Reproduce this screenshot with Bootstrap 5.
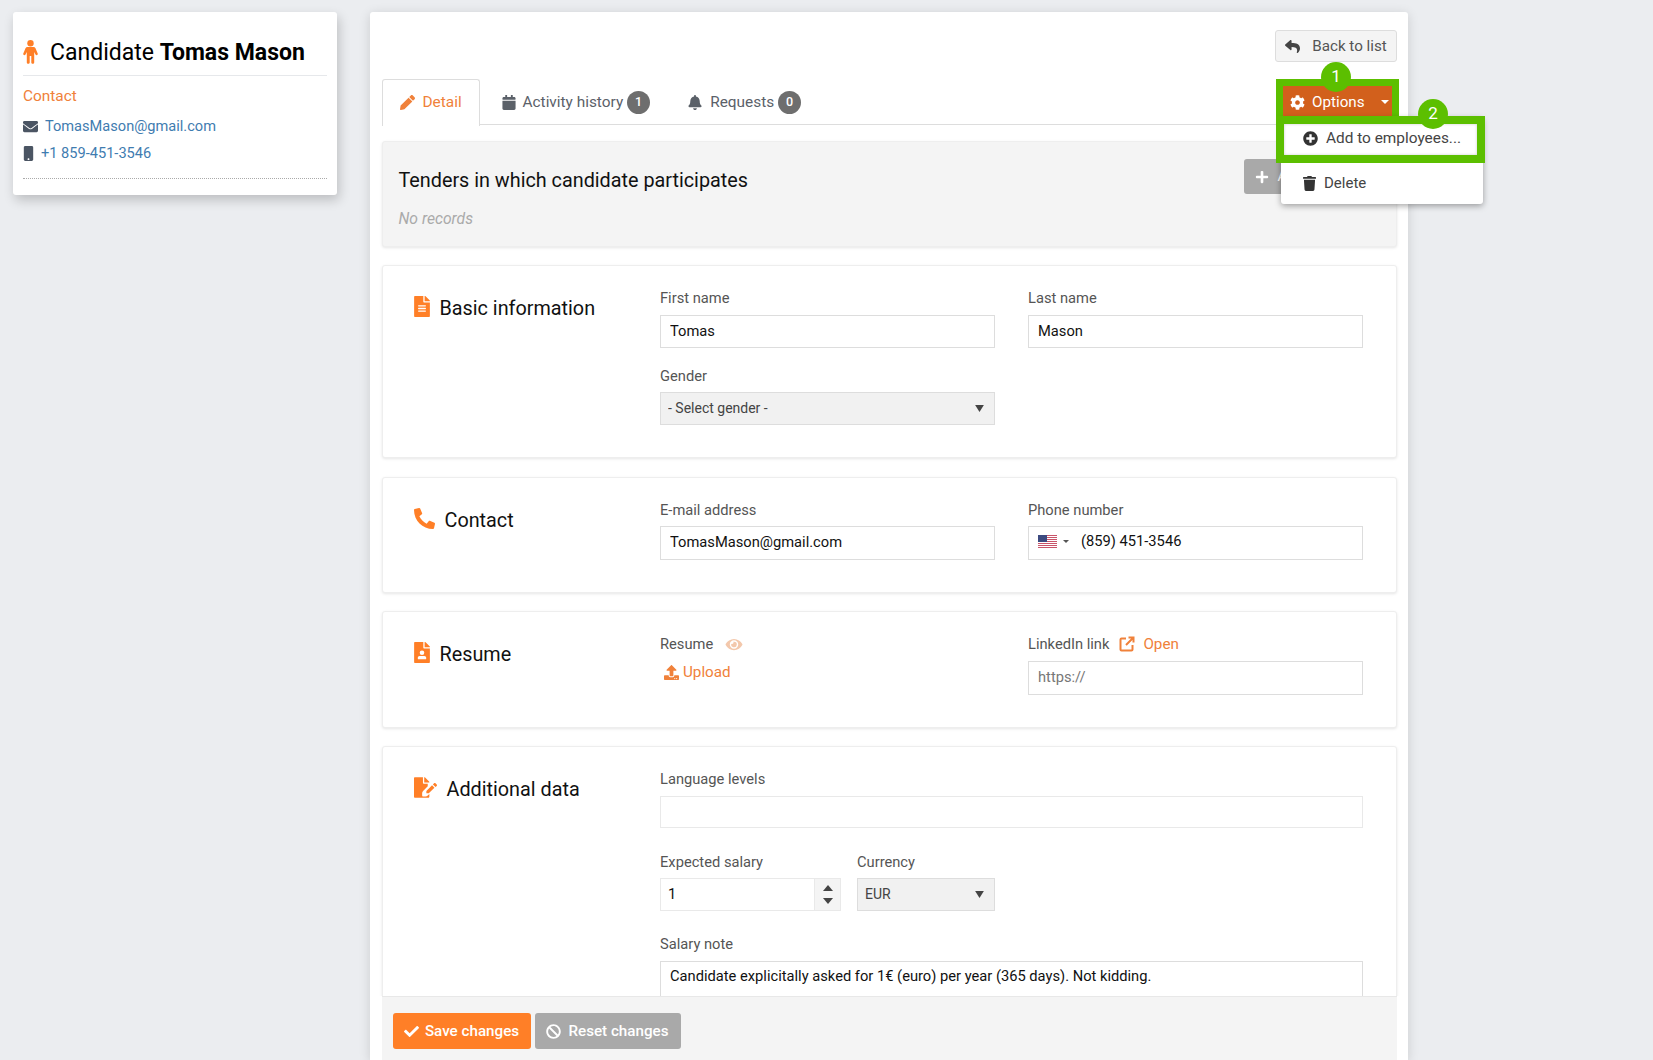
<!DOCTYPE html>
<html lang="en">
<head>
<meta charset="utf-8">
<title>Candidate Tomas Mason</title>
<link href="https://cdn.jsdelivr.net/npm/bootstrap@5.3.0/dist/css/bootstrap.min.css" rel="stylesheet">
<style>
html,body{height:100%}
body{background:#ebedf0;font-family:Roboto,"Liberation Sans",sans-serif;font-size:14.7px;color:#555;overflow:hidden;padding:12px 13px 0}
svg{fill:currentColor;display:inline-block;flex:none}
.ic-orange{color:#ff7f27}
.side-card{width:324px;height:183px;background:#fff;border-radius:3px;box-shadow:2px 5px 12px rgba(0,0,0,.2);padding:26px 10px 0;flex:none}
.side-title{font-size:23px;color:#000;font-weight:400;margin:0;line-height:30px;height:38px;border-bottom:1px solid #e6e8eb;display:flex;gap:12px;align-items:flex-start}
.side-title svg{margin-top:2px}
.side-head{color:#f0813a;font-size:15.4px;line-height:22px;margin-top:9px;margin-bottom:8px}
.side-row{display:flex;align-items:center;line-height:22px;margin-bottom:5px;color:#4b5563;font-size:14.6px}
.side-row svg{margin-right:7px}
.side-row a{color:#3f7cb0;text-decoration:none}
.side-dots{border-top:1px dotted #aaa;margin-top:14px}
.main-card{width:1038px;margin-left:33px;height:calc(100vh - 12px);background:#fff;border-radius:3px 3px 0 0;box-shadow:0 2px 12px rgba(0,0,0,.14);display:flex;flex-direction:column;flex:none}
.main-head{padding:18px 11px 0 11.5px;position:relative;z-index:5}
.back-btn{height:32px;width:122px;background:#f4f4f4;border:1px solid #ddd;border-radius:3px;color:#555;font-size:15.2px;padding:0;display:flex;align-items:center;justify-content:center;gap:12px;margin-left:auto;margin-bottom:17px}
.back-btn svg{color:#444}
.tab-bar{display:flex;align-items:flex-start;height:46px;border-bottom:1px solid #ddd;position:relative}
.tab-item{height:46px;display:flex;align-items:center;padding:0 17px;color:#5b6169;gap:8px;border:1px solid transparent;border-bottom:0;text-decoration:none;font-size:15.4px}
.tab-item.is-active{background:#fff;border-color:#ddd;color:#f0813a;height:47px;padding-bottom:1px;border-radius:3px 3px 0 0;width:98px;margin-right:4px}
.tab-cal{margin-right:-1px}
.tab-req{margin-left:2px}
.tab-count{width:23px;height:23px;border-radius:50%;background:#6e6e6e;color:#fff;font-size:12.5px;font-weight:500;display:flex;align-items:center;justify-content:center;margin-left:-4px}
.opt-wrap{position:absolute;right:5px;top:7px;width:109px;height:30px}
.opt-btn{width:109px;height:30px;background:#d2601c;color:#fff;border:0;border-radius:0;outline:7px solid #5cbf00;padding:2px 3px 0 7px;display:flex;align-items:center;gap:7px;font-size:15.2px;position:relative;z-index:1}
.opt-caret{margin-left:auto;width:0;height:0;border:4px solid transparent;border-top-color:#fff;border-bottom:0}
.opt-menu{display:block;position:absolute;left:-2px;top:31px;width:202px;height:87px;background:#fff;border:0;border-radius:3px;box-shadow:0 2px 6px rgba(0,0,0,.35);padding:0;z-index:2}
.opt-item{position:absolute;right:6px;display:flex;align-items:center;color:#444;padding:0 0 0 18px;text-decoration:none;white-space:nowrap}
.opt-add{left:3px;top:7px;height:31px;outline:8px solid #5cbf00;background:#fff;gap:8px;padding-left:19px;padding-bottom:2px;font-size:15.4px;box-shadow:0 0 3px rgba(0,0,0,.2) inset}
.opt-add svg{color:#333}
.opt-del{left:4px;top:52px;height:29px;gap:8px;font-size:15px;color:#444}
.opt-del svg{color:#333}
.step-dot{position:absolute;width:30px;height:30px;border-radius:50%;background:#5cbf00;color:#fff;font-size:17px;display:flex;align-items:center;justify-content:center;z-index:3}
.step-a{left:38px;top:-24px}
.step-b{left:135px;top:13px}
.scroll-area{flex:1 1 0;min-height:0;overflow:hidden;padding:16px 11px 0 11.5px}
.sec-panel{background:#fff;border:1px solid #eee;border-radius:3px;box-shadow:0 1px 3px rgba(0,0,0,.1);margin-bottom:18px;padding:21px 33px 16px 31px;display:flex}
.sec-shift{margin-top:19px}
.sec-muted{background:#f4f4f4;display:block;height:106px;padding:0 16px;position:relative}
.sec-muted h5{font-size:19.8px;font-weight:400;color:#111;margin:0;padding-top:24px;line-height:30px}
.no-rec{font-style:italic;color:#aaa;margin-top:12px;line-height:22px;font-size:15.7px}
.add-btn{position:absolute;left:861px;top:17px;width:140px;height:35px;background:#a9a9a9;color:#fff;border-radius:3px;display:flex;align-items:center;padding:0 11px;gap:9px;font-size:15px}
.sec-left{width:246.500px;flex:none;display:flex;gap:10px;align-items:flex-start;font-size:19.8px;color:#111;line-height:26px;padding-top:9px}
.sec-left svg{margin-top:0}
.sec-form{width:703px;flex:none}
.sec-row{--bs-gutter-x:33px;--bs-gutter-y:0}
.fld{margin-bottom:16px}
.fld-wide{margin-bottom:22px}
.fld-label{display:block;line-height:22px;margin-bottom:6px;color:#555}
.lbl-low{padding-top:1px;margin-bottom:5px;line-height:22px}
.fld-input{height:33px;border:1px solid #ddd;border-radius:0;padding:0 9px 2px;font-size:14.7px;color:#111;box-shadow:none}
.fld-tall{height:34px;padding-bottom:3px}
.lbl-tall{margin-bottom:5px}
.fld-soft{border-color:#e9e9e9}
.fld-short{height:32px}
.fld-input::placeholder{color:#777}
.fld-select{height:33px;border:1px solid #ddd;border-radius:0;padding:0 7px;font-size:14px;color:#444;background-color:#f1f1f1;background-position:right 10px center;background-size:9px 7px;background-image:url("data:image/svg+xml,%3Csvg xmlns='http://www.w3.org/2000/svg' viewBox='0 0 10 8'%3E%3Cpath fill='%23444' d='M0 0h10L5 8z'/%3E%3C/svg%3E")}
.phone-box{height:34px;border:1px solid #ddd;display:flex;align-items:center;padding:0 0 3px 9px;color:#111}
.phone-caret{width:0;height:0;border:3.5px solid transparent;border-top-color:#555;border-bottom:0;margin:0 12px 0 6px}
.link-orange{color:#f0813a;text-decoration:none;font-size:15.2px}
.inline-label{display:flex;align-items:center;line-height:22px;margin-bottom:6px}
.up-row{display:flex;align-items:center;gap:4px;line-height:22px;padding-left:4px}
.num-box{display:flex;height:33px;width:181px}
.num-box input{flex:1;min-width:0;padding-left:7px}
.num-spin{width:26px;border:1px solid #e9e9e9;border-left:0;background:#f4f4f4;display:flex;flex-direction:column;align-items:center;justify-content:center;gap:7px;color:#444}
.num-up,.num-down{width:0;height:0;border:5px solid transparent}
.num-up{border-bottom:6px solid #444;border-top:0}
.num-down{border-top:6px solid #444;border-bottom:0}
.cur-col{width:138px;margin-left:16px}
.note-box{height:60px;resize:none;padding-top:3px;line-height:22px;width:100%;display:block}
.foot-bar{height:64px;flex:none;margin:0 11px 0 11.5px;background:#f4f4f4;border-top:1px solid #e8e8e8;padding:16px 11px 0;display:flex;gap:4px}
.foot-btn{height:36px;border:0;border-radius:3px;color:#fff;font-size:15.2px;font-weight:500;display:flex;align-items:center;padding:0;justify-content:center}
.btn-save{width:138px;background:#ff7f27;gap:6px}
.btn-reset{width:146px;background:#a9a9a9;gap:7px}
.eye-ic{margin-left:12px}
.open-lnk{margin-left:10px}
</style>
</head>
<body class="d-flex align-items-start">
<aside class="side-card">
  <h4 class="side-title"><svg class="ic-orange" width="15" height="24" viewBox="0 0 15 24"><circle cx="7.5" cy="3.2" r="3.2"/><path d="M4.5 7h6c.9 0 1.6.4 2 1.2l2.2 5.3c.6 1.5-1.5 2.3-2.2.9L11.2 12v10.4c0 1.8-2.9 1.8-2.9 0V16H6.700v6.400c0 1.800-2.900 1.800-2.900 0V12l-1.300 2.400c-.7 1.400-2.800.6-2.200-.9l2.200-5.300C2.900 7.400 3.600 7 4.500 7z"/></svg><span>Candidate <b>Tomas Mason</b></span></h4>
  <div class="side-head">Contact</div>
  <div class="side-row"><svg width="15" height="15" viewBox="0 0 512 512"><path d="M502.3 190.8c3.9-3.1 9.7-.2 9.7 4.7V400c0 26.5-21.5 48-48 48H48c-26.5 0-48-21.500-48-48V195.6c0-5 5.700-7.800 9.700-4.700 22.400 17.400 52.100 39.500 154.100 113.600 21.100 15.400 56.700 47.800 92.200 47.600 35.700.3 72-32.800 92.300-47.600 102-74.100 131.600-96.300 154-113.700zM256 320c23.200.4 56.600-29.200 73.400-41.400 132.700-96.300 142.800-104.700 173.400-128.700 5.800-4.500 9.200-11.500 9.200-18.900v-19c0-26.500-21.500-48-48-48H48C21.500 64 0 85.500 0 112v19c0 7.400 3.400 14.300 9.200 18.900 30.600 23.900 40.700 32.400 173.400 128.700 16.800 12.200 50.200 41.800 73.400 41.400z"/></svg><a href="#">TomasMason@gmail.com</a></div>
  <div class="side-row"><svg width="11" height="15" viewBox="0 0 320 512"><path d="M272 0H48C21.500 0 0 21.500 0 48v416c0 26.500 21.500 48 48 48h224c26.500 0 48-21.500 48-48V48c0-26.500-21.500-48-48-48zM160 480c-17.700 0-32-14.300-32-32s14.300-32 32-32 32 14.300 32 32-14.300 32-32 32z"/></svg><a href="#">+1 859-451-3546</a></div>
  <div class="side-dots"></div>
</aside>

<main class="main-card">
  <div class="main-head">
    <button class="back-btn" type="button"><svg width="15" height="15" viewBox="0 0 512 512"><path d="M8.309 189.836L184.313 37.851C199.719 24.546 224 35.347 224 56.015v80.053c160.629 1.839 288 34.032 288 186.258 0 61.441-39.581 122.309-83.333 154.132-13.653 9.931-33.111-2.533-28.077-18.631 45.344-145.012-21.507-183.510-176.590-185.742V360c0 20.700-24.300 31.453-39.687 18.164l-176.004-152c-11.071-9.562-11.086-26.753 0-36.328z"/></svg>Back to list</button>
    <div class="tab-bar">
      <a class="tab-item is-active" href="#"><svg width="15" height="15" viewBox="0 0 512 512"><path d="M497.900 142.100l-46.100 46.100c-4.700 4.700-12.300 4.700-17 0l-111-111c-4.700-4.700-4.700-12.300 0-17l46.100-46.100c18.700-18.700 49.100-18.700 67.900 0l60.100 60.100c18.800 18.700 18.800 49.100 0 67.900zM284.200 99.800L21.600 362.400.4 483.900c-2.900 16.400 11.400 30.600 27.800 27.800l121.500-21.300 262.600-262.600c4.700-4.700 4.700-12.300 0-17l-111-111c-4.800-4.700-12.400-4.700-17.100 0z"/></svg>Detail</a>
      <a class="tab-item" href="#"><svg class="tab-cal" width="14" height="15" viewBox="0 0 448 512"><path d="M12 192h424c6.600 0 12 5.400 12 12v260c0 26.500-21.500 48-48 48H48c-26.500 0-48-21.500-48-48V204c0-6.600 5.400-12 12-12zm436-44v-36c0-26.500-21.500-48-48-48h-48V12c0-6.600-5.400-12-12-12h-40c-6.600 0-12 5.400-12 12v52H160V12c0-6.600-5.400-12-12-12h-40c-6.600 0-12 5.400-12 12v52H48C21.500 64 0 85.500 0 112v36c0 6.600 5.400 12 12 12h424c6.600 0 12-5.400 12-12z"/></svg>Activity history<span class="tab-count">1</span></a>
      <a class="tab-item tab-req" href="#"><svg width="14" height="15" viewBox="0 0 448 512"><path d="M224 512c35.320 0 63.970-28.650 63.970-64H160.030c0 35.350 28.650 64 63.970 64zm215.390-149.710c-19.320-20.760-55.470-51.990-55.470-154.290 0-77.700-54.480-139.900-127.940-155.160V32c0-17.670-14.320-32-31.980-32s-31.980 14.330-31.980 32v20.840C118.560 68.100 64.080 130.300 64.080 208c0 102.300-36.150 133.530-55.470 154.290-6 6.450-8.660 14.160-8.610 21.710.11 16.400 12.980 32 32.100 32h383.800c19.120 0 32-15.600 32.100-32 .05-7.550-2.610-15.270-8.610-21.710z"/></svg>Requests<span class="tab-count">0</span></a>
      <div class="opt-wrap">
        <button class="opt-btn" type="button"><svg width="15" height="15" viewBox="0 0 512 512"><path d="M487.400 315.700l-42.600-24.600c4.300-23.200 4.300-47 0-70.200l42.600-24.600c4.900-2.800 7.100-8.600 5.500-14-11.100-35.600-30-67.800-54.700-94.600-3.800-4.100-10-5.100-14.800-2.300L380.800 110c-17.900-15.400-38.500-27.300-60.800-35.100V25.800c0-5.600-3.900-10.500-9.400-11.700-36.700-8.200-74.300-7.800-109.200 0-5.500 1.200-9.400 6.100-9.400 11.700V75c-22.200 7.900-42.800 19.800-60.800 35.100L88.700 85.500c-4.900-2.800-11-1.900-14.800 2.300-24.700 26.700-43.600 58.900-54.700 94.600-1.700 5.400.6 11.200 5.500 14L67.300 221c-4.300 23.200-4.300 47 0 70.200l-42.600 24.600c-4.900 2.800-7.100 8.600-5.500 14 11.100 35.600 30 67.800 54.700 94.600 3.800 4.100 10 5.100 14.800 2.300l42.600-24.600c17.900 15.400 38.500 27.300 60.800 35.100v49.200c0 5.600 3.900 10.500 9.400 11.700 36.700 8.200 74.300 7.800 109.200 0 5.500-1.200 9.400-6.100 9.400-11.700v-49.200c22.200-7.900 42.800-19.800 60.800-35.100l42.600 24.600c4.900 2.800 11 1.900 14.800-2.300 24.700-26.700 43.600-58.900 54.700-94.600 1.500-5.500-.7-11.300-5.600-14.100zM256 336c-44.100 0-80-35.900-80-80s35.900-80 80-80 80 35.900 80 80-35.900 80-80 80z"/></svg>Options<span class="opt-caret"></span></button>
        <span class="step-dot step-a">1</span>
        <div class="opt-menu dropdown-menu">
          <a class="opt-item opt-add" href="#"><svg width="15" height="15" viewBox="0 0 512 512"><path d="M256 8C119 8 8 119 8 256s111 248 248 248 248-111 248-248S393 8 256 8zm144 276c0 6.600-5.400 12-12 12h-92v92c0 6.600-5.400 12-12 12h-56c-6.600 0-12-5.400-12-12v-92h-92c-6.600 0-12-5.400-12-12v-56c0-6.600 5.400-12 12-12h92v-92c0-6.600 5.400-12 12-12h56c6.600 0 12 5.400 12 12v92h92c6.600 0 12 5.400 12 12v56z"/></svg>Add to employees...</a>
          <a class="opt-item opt-del" href="#"><svg width="13" height="15" viewBox="0 0 448 512"><path d="M432 32H312l-9.400-18.700A24 24 0 0 0 281.100 0H166.800a23.720 23.720 0 0 0-21.400 13.300L136 32H16A16 16 0 0 0 0 48v32a16 16 0 0 0 16 16h416a16 16 0 0 0 16-16V48a16 16 0 0 0-16-16zM53.200 467a48 48 0 0 0 47.900 45h245.800a48 48 0 0 0 47.900-45L416 128H32z"/></svg>Delete</a>
        </div>
        <span class="step-dot step-b">2</span>
      </div>
    </div>
  </div>

  <div class="scroll-area">
    <section class="sec-panel sec-muted">
      <h5>Tenders in which candidate participates</h5>
      <div class="no-rec">No records</div>
      <div class="add-btn"><svg width="14" height="14" viewBox="0 0 448 512"><path d="M416 208H272V64c0-17.670-14.330-32-32-32h-32c-17.670 0-32 14.330-32 32v144H32c-17.670 0-32 14.330-32 32v32c0 17.670 14.330 32 32 32h144v144c0 17.670 14.330 32 32 32h32c17.670 0 32-14.330 32-32V304h144c17.670 0 32-14.330 32-32v-32c0-17.670-14.330-32-32-32z"/></svg>Add</div>
    </section>

    <section class="sec-panel">
      <div class="sec-left"><svg class="ic-orange" width="16" height="21" viewBox="0 0 384 512"><path d="M224 136V0H24C10.700 0 0 10.700 0 24v464c0 13.300 10.700 24 24 24h336c13.300 0 24-10.700 24-24V160H248c-13.200 0-24-10.800-24-24zm64 236c0 6.600-5.400 12-12 12H108c-6.600 0-12-5.400-12-12v-8c0-6.600 5.400-12 12-12h168c6.600 0 12 5.400 12 12v8zm0-64c0 6.600-5.400 12-12 12H108c-6.600 0-12-5.400-12-12v-8c0-6.600 5.400-12 12-12h168c6.600 0 12 5.400 12 12v8zm0-72v8c0 6.600-5.400 12-12 12H108c-6.600 0-12-5.400-12-12v-8c0-6.600 5.400-12 12-12h168c6.600 0 12 5.400 12 12zm96-114.100v6.100H256V0h6.100c6.400 0 12.500 2.500 17 7l97.900 98c4.500 4.500 7 10.600 7 16.900z"/></svg>Basic information</div>
      <div class="sec-form">
        <div class="row sec-row">
          <div class="col-6 fld"><label class="fld-label">First name</label><input class="form-control fld-input" value="Tomas"></div>
          <div class="col-6 fld"><label class="fld-label">Last name</label><input class="form-control fld-input" value="Mason"></div>
          <div class="col-6 fld"><label class="fld-label lbl-low">Gender</label><select class="form-select fld-select"><option>- Select gender -</option></select></div>
        </div>
      </div>
    </section>

    <section class="sec-panel sec-shift">
      <div class="sec-left"><svg class="ic-orange" width="21" height="21" viewBox="0 0 512 512"><path transform="matrix(-1 0 0 1 512 0)" d="M493.400 24.600l-104-24c-11.300-2.600-22.900 3.300-27.500 13.900l-48 112c-4.200 9.800-1.400 21.300 6.900 28l60.600 49.600c-36 76.700-98.900 140.500-177.200 177.200l-49.600-60.600c-6.800-8.300-18.200-11.100-28-6.900l-112 48C3.900 366.500-2 378.100.6 389.400l24 104C27.100 504.200 36.700 512 48 512c256.100 0 464-207.500 464-464 0-11.200-7.700-20.900-18.600-23.400z"/></svg>Contact</div>
      <div class="sec-form">
        <div class="row sec-row">
          <div class="col-6 fld"><label class="fld-label lbl-tall">E-mail address</label><input class="form-control fld-input fld-tall" value="TomasMason@gmail.com"></div>
          <div class="col-6 fld"><label class="fld-label lbl-tall">Phone number</label>
            <div class="phone-box"><svg width="19" height="13" viewBox="0 0 19 13"><rect width="19" height="13" fill="#fff"/><path fill="#c9546a" d="M0 0h19v1H0zM0 2h19v1H0zM0 4h19v1H0zM0 6h19v1H0zM0 8h19v1H0zM0 10h19v1H0zM0 12h19v1H0z"/><rect width="9" height="7" fill="#3c4a80"/></svg><span class="phone-caret"></span>(859) 451-3546</div>
          </div>
        </div>
      </div>
    </section>

    <section class="sec-panel">
      <div class="sec-left"><svg class="ic-orange" width="16" height="21" viewBox="0 0 384 512"><path fill-rule="evenodd" d="M24 0h200v136c0 13.200 10.800 24 24 24h136v328c0 13.300-10.700 24-24 24H24c-13.300 0-24-10.700-24-24V24C0 10.700 10.700 0 24 0zm168 205a56 56 0 1 0 0 112 56 56 0 0 0 0-112zm-58 136c-25 0-44 20-44 44v24c0 8 6 14 14 14h176c8 0 14-6 14-14v-24c0-24-19-44-44-44zM256 0h6.100c6.400 0 12.500 2.500 17 7l97.900 98c4.500 4.500 7 10.600 7 16.900v6.100H256z"/></svg>Resume</div>
      <div class="sec-form">
        <div class="row sec-row">
          <div class="col-6 fld">
            <div class="inline-label">Resume<svg class="eye-ic" width="18" height="15" viewBox="0 0 576 512"><path fill="#f3c8ac" d="M572.520 241.400C518.290 135.590 410.930 64 288 64S57.680 135.640 3.480 241.410a32.350 32.350 0 0 0 0 29.190C57.710 376.410 165.070 448 288 448s230.320-71.640 284.520-177.410a32.350 32.350 0 0 0 0-29.190zM288 400a144 144 0 1 1 144-144 143.930 143.930 0 0 1-144 144zm0-240a95.310 95.310 0 0 0-25.310 3.790 47.850 47.850 0 0 1-66.900 66.900A95.780 95.780 0 1 0 288 160z"/></svg></div>
            <a class="up-row link-orange" href="#"><svg width="15" height="15" viewBox="0 0 512 512"><path d="M296 384h-80c-13.300 0-24-10.700-24-24V192h-87.700c-17.800 0-26.700-21.500-14.100-34.100L242.300 5.700c7.500-7.500 19.800-7.500 27.300 0l152.200 152.200c12.600 12.600 3.700 34.100-14.100 34.100H320v168c0 13.300-10.700 24-24 24zm216-8v112c0 13.300-10.700 24-24 24H24c-13.300 0-24-10.700-24-24V376c0-13.300 10.700-24 24-24h136v8c0 30.900 25.100 56 56 56h80c30.900 0 56-25.100 56-56v-8h136c13.300 0 24 10.700 24 24zm-124 88c0-11-9-20-20-20s-20 9-20 20 9 20 20 20 20-9 20-20zm64 0c0-11-9-20-20-20s-20 9-20 20 9 20 20 20 20-9 20-20z"/></svg>Upload</a>
          </div>
          <div class="col-6 fld">
            <div class="inline-label">LinkedIn link<a class="d-flex align-items-center link-orange open-lnk" href="#"><svg class="me-2" width="16" height="16" viewBox="0 0 16 16"><path fill="none" stroke="currentColor" stroke-width="2" d="M7 2.500H2.500a1 1 0 0 0-1 1V13.500a1 1 0 0 0 1 1H12.500a1 1 0 0 0 1-1V9M7 9l7-7M9.500 1.500H14.500V6.500"/></svg>Open</a></div>
            <input class="form-control fld-input fld-tall" placeholder="https://">
          </div>
        </div>
      </div>
    </section>

    <section class="sec-panel">
      <div class="sec-left"><svg class="ic-orange" width="23" height="21" viewBox="0 0 576 512"><path d="M224 136V0H24C10.700 0 0 10.700 0 24v464c0 13.300 10.700 24 24 24h336c13.300 0 24-10.700 24-24v-70l-40 40c-15 15-35 24-56 24h-60c-13 0-24-11-24-24v-60c0-21 9-41 24-56l116-116V160H248c-13.200 0-24-10.800-24-24zm160-14.100c0-6.300-2.500-12.400-7-16.900L279.100 7c-4.500-4.500-10.600-7-17-7H256v128h128zM568 180l-30-30c-10-10-26-10-36 0l-28 28 66 66 28-28c10-10 10-26 0-36zM452 200L310 342v60h60l142-142z"/></svg>Additional data</div>
      <div class="sec-form">
        <div class="fld-wide"><label class="fld-label">Language levels</label><input class="form-control fld-input fld-soft fld-short"></div>
        <div class="d-flex fld-wide">
          <div><label class="fld-label lbl-low">Expected salary</label>
            <div class="num-box"><input class="form-control fld-input fld-soft" value="1"><div class="num-spin"><span class="num-up"></span><span class="num-down"></span></div></div>
          </div>
          <div class="cur-col"><label class="fld-label lbl-low">Currency</label><select class="form-select fld-select"><option>EUR</option></select></div>
        </div>
        <div><label class="fld-label">Salary note</label><textarea class="form-control fld-input note-box">Candidate explicitally asked for 1€ (euro) per year (365 days). Not kidding.</textarea></div>
      </div>
    </section>
  </div>

  <div class="foot-bar">
    <button class="foot-btn btn-save" type="button"><svg width="15" height="15" viewBox="0 0 512 512"><path d="M173.898 439.404l-166.400-166.400c-9.997-9.997-9.997-26.206 0-36.204l36.203-36.204c9.997-9.998 26.207-9.998 36.204 0L192 312.690 432.095 72.596c9.997-9.997 26.207-9.997 36.204 0l36.203 36.204c9.997 9.997 9.997 26.206 0 36.204l-294.400 294.401c-9.998 9.997-26.207 9.997-36.204-.001z"/></svg>Save changes</button>
    <button class="foot-btn btn-reset" type="button"><svg width="15" height="15" viewBox="0 0 512 512"><path d="M256 8C119.034 8 8 119.033 8 256s111.034 248 248 248 248-111.034 248-248S392.967 8 256 8zm130.108 117.892c65.448 65.448 70 165.481 20.677 235.637L150.470 105.216c70.204-49.356 170.226-44.735 235.638 20.676zM125.892 386.108c-65.448-65.448-70-165.481-20.677-235.637L361.530 406.784c-70.203 49.356-170.226 44.736-235.638-20.676z"/></svg>Reset changes</button>
  </div>
</main>
<script src="https://cdn.jsdelivr.net/npm/bootstrap@5.3.0/dist/js/bootstrap.bundle.min.js"></script>
</body>
</html>
